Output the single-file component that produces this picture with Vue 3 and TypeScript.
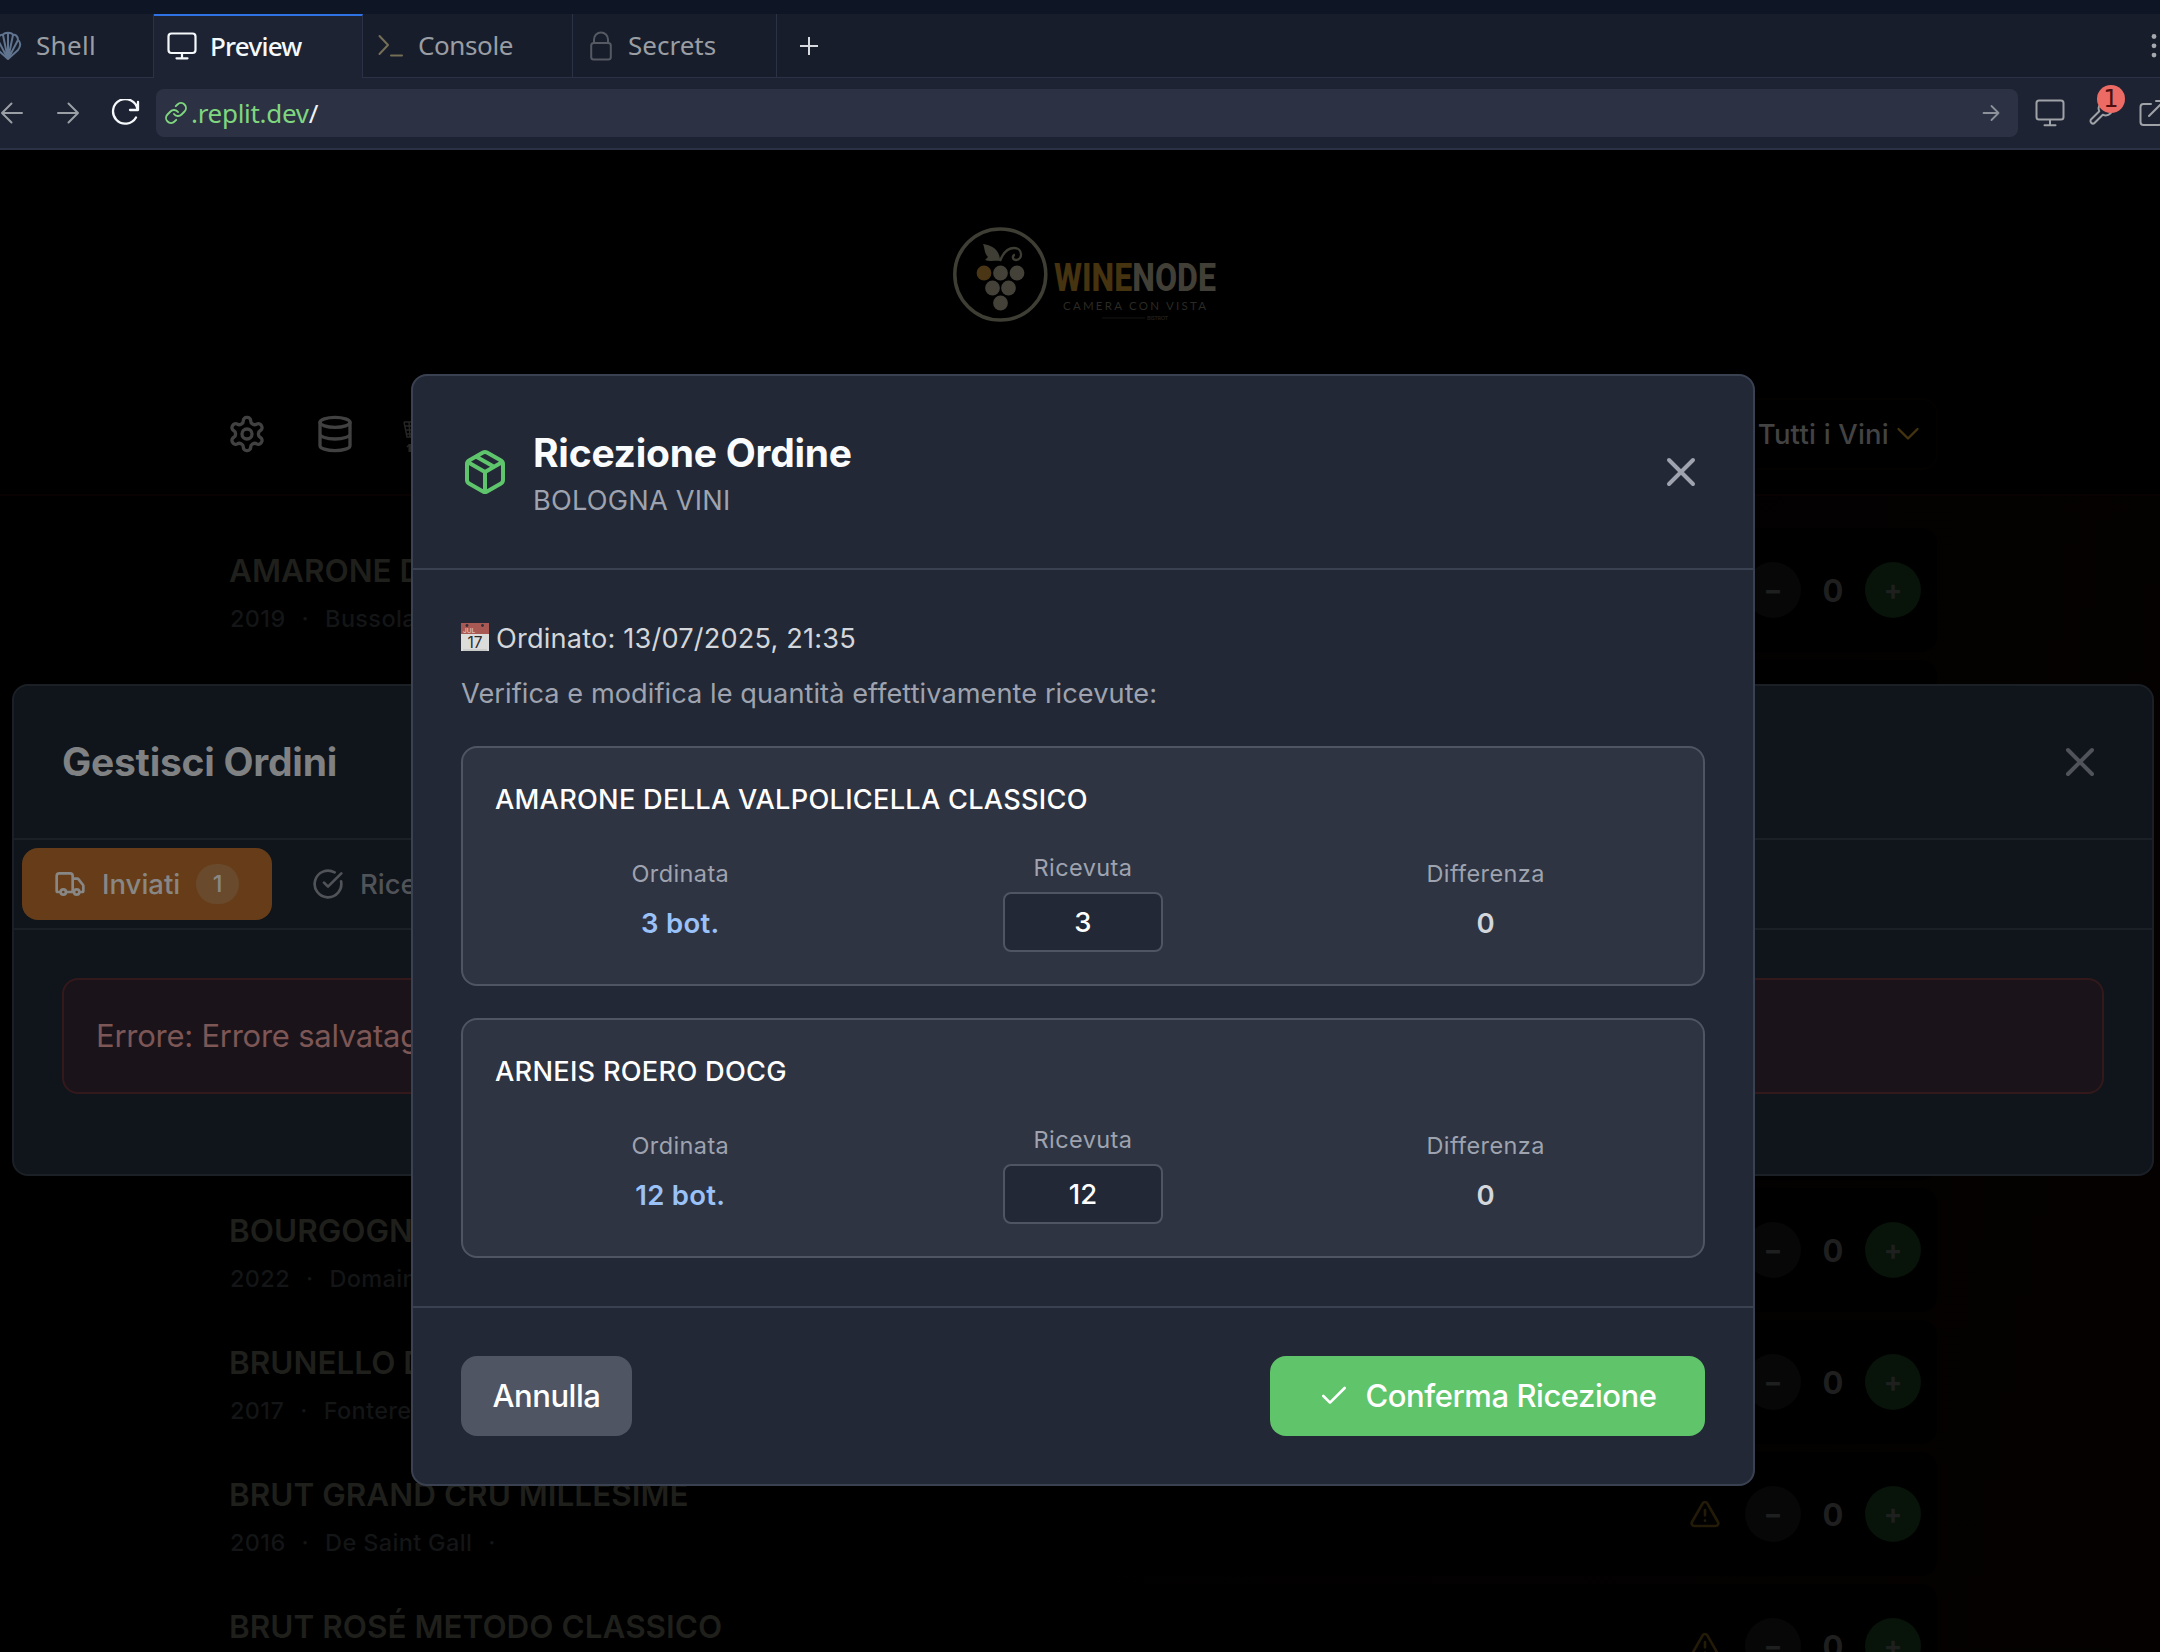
<script setup lang="ts">
interface Wine {
  name: string
  year: string
  producer: string
}

interface OrderLine {
  name: string
  ordered: number
  received: number
}

const wines: Wine[] = [
  { name: 'AMARONE DELLA VALPOLICELLA CLASSICO', year: '2019', producer: 'Bussola' },
  { name: '', year: '', producer: '' },
  { name: '', year: '', producer: '' },
  { name: '', year: '', producer: '' },
  { name: '', year: '', producer: '' },
  { name: 'BOURGOGNE', year: '2022', producer: 'Domaine' },
  { name: 'BRUNELLO DI', year: '2017', producer: 'Fonterenza' },
  { name: 'BRUT GRAND CRU MILLESIME', year: '2016', producer: 'De Saint Gall' },
  { name: 'BRUT ROSÉ METODO CLASSICO', year: '', producer: '' },
]

const lines: OrderLine[] = [
  { name: 'AMARONE DELLA VALPOLICELLA CLASSICO', ordered: 3, received: 3 },
  { name: 'ARNEIS ROERO DOCG', ordered: 12, received: 12 },
]

// grape bunch inside the logo, first berry is highlighted
const berries: [number, number][] = [
  [31, 46], [47.5, 46], [64, 46], [39.5, 61], [55.5, 61], [47.5, 76],
]
</script>

<template>
  <div class="page">
    <div class="strip"></div>
    <div class="tabs">
      <div class="tab shell">
        <svg class="i-shell" width="28" height="30" viewBox="0 0 28 30" fill="none" stroke="#60748f" stroke-width="2" stroke-linejoin="round">
          <path d="M14 28 4 19C1 15 1 11 4 9c0-4 3-6 5-5 1-3 9-3 10 0 2-1 5 1 5 5 3 2 3 6 0 10Z" />
          <path d="M14 28 4 9M14 28 9 4M14 28V2M14 28 19 4M14 28 24 9" />
        </svg>
        <span>Shell</span>
      </div>
      <div class="tab preview">
        <svg width="30" height="28" viewBox="0 0 30 28" fill="none" stroke="#f5f9fc" stroke-width="2.2" stroke-linecap="round">
          <rect x="1.5" y="1.5" width="27" height="19.5" rx="3" /><path d="M15 21v5M9.5 26.3h11" />
        </svg>
        <span>Preview</span>
      </div>
      <div class="tab console">
        <svg width="26" height="24" viewBox="0 0 26 24" fill="none" stroke="#756f55" stroke-width="2" stroke-linecap="round" stroke-linejoin="round">
          <path d="M1.5 2 10 11 1.5 20M13 21.5h11" />
        </svg>
        <span>Console</span>
      </div>
      <div class="tab secrets">
        <svg width="22" height="30" viewBox="0 0 22 30" fill="none" stroke="#545962" stroke-width="2">
          <rect x="1.2" y="12" width="19.6" height="16.5" rx="2.5" /><path d="M4 12V8.5a7 7 0 0 1 14 0V12" />
        </svg>
        <span>Secrets</span>
      </div>
      <div class="plus">
        <svg width="20" height="20" viewBox="0 0 20 20" stroke="#d6d9dd" stroke-width="2"><path d="M10 1v18M1 10h18" /></svg>
      </div>
      <svg class="dots" width="6" height="24" viewBox="0 0 6 24" fill="#a5a8ac">
        <circle cx="3" cy="3" r="2.4" /><circle cx="3" cy="12.3" r="2.4" /><circle cx="3" cy="21.6" r="2.4" />
      </svg>
    </div>
    <div class="toolbar">
      <svg class="back" width="24" height="22" viewBox="0 0 24 22" fill="none" stroke="#9a9fa6" stroke-width="2" stroke-linecap="round" stroke-linejoin="round">
        <path d="M22 11H2M11.5 1.5 2 11l9.5 9.5" />
      </svg>
      <svg class="fwd" width="24" height="22" viewBox="0 0 24 22" fill="none" stroke="#9a9fa6" stroke-width="2" stroke-linecap="round" stroke-linejoin="round">
        <path d="M2 11h20M12.5 1.5 22 11l-9.5 9.5" />
      </svg>
      <svg class="reload" width="30" height="28" viewBox="0 0 30 28" fill="none" stroke="#f5f9fc" stroke-width="2.3" stroke-linecap="round" stroke-linejoin="round">
        <path d="M28 3v8h-8M27.500 10.5A12.300 12.300 0 1 0 26 18.500" />
      </svg>
      <div class="url">
        <svg width="24" height="24" viewBox="0 0 24 24" fill="none" stroke="#7fd67f" stroke-width="1.9" stroke-linecap="round">
          <path d="M10 13a5 5 0 0 0 7.54.54l3-3a5 5 0 0 0-7.07-7.07l-1.72 1.71" />
          <path d="M14 11a5 5 0 0 0-7.54-.54l-3 3a5 5 0 0 0 7.07 7.07l1.71-1.71" />
        </svg>
        <span class="host">.replit.dev</span><span class="slash">/</span>
        <svg class="go" width="18" height="18" viewBox="0 0 18 18" fill="none" stroke="#8d9199" stroke-width="1.8" stroke-linecap="round" stroke-linejoin="round">
          <path d="M1.5 9h15M9.5 2l7 7-7 7" />
        </svg>
      </div>
      <svg class="screen" width="30" height="28" viewBox="0 0 30 28" fill="none" stroke="#9fa2a7" stroke-width="2" stroke-linecap="round">
        <rect x="1.5" y="1.5" width="27" height="19" rx="2.5" /><path d="M15 21v5M9.5 26.3h11" />
      </svg>
      <div class="tool">
        <svg width="28" height="28" viewBox="0 0 24 24" fill="none" stroke="#9fa2a7" stroke-width="1.7" stroke-linecap="round" stroke-linejoin="round">
          <path d="M14.7 6.3a1 1 0 0 0 0 1.4l1.6 1.6a1 1 0 0 0 1.4 0l3.77-3.77a6 6 0 0 1-7.94 7.94l-6.91 6.91a2.12 2.12 0 0 1-3-3l6.91-6.91a6 6 0 0 1 7.94-7.94z" />
        </svg>
        <span class="count">1</span>
      </div>
      <svg class="ext" width="28" height="28" viewBox="0 0 28 28" fill="none" stroke="#9fa2a7" stroke-width="2" stroke-linecap="round" stroke-linejoin="round">
        <path d="M12 5H4.500A3 3 0 0 0 1.500 8v15a3 3 0 0 0 3 3h15a3 3 0 0 0 3-3v-7M10 17 25 2M17 2h8v8" />
      </svg>
    </div>

    <div class="app">
      <div class="brand">
        <svg width="320" height="100" viewBox="0 0 320 100">
          <circle cx="47.3" cy="47.5" r="45.5" fill="none" stroke="#3f3e34" stroke-width="3.5" />
          <circle v-for="(b, i) in berries" :key="i" :cx="b[0]" :cy="b[1]" r="7.4" :fill="i === 0 ? '#4a3614' : '#434138'" />
          <path d="M30 17c9 1 17 6 17 17-4-1-9 1-15-1l3-3c-4-4-3-9-5-13Z" fill="#3f3e34" />
          <path d="M47 34C50 26 55 21 61 21c9 0 9 12 2 12-4 0-4-5-1-5" fill="none" stroke="#3f3e34" stroke-width="2.3" />
          <text class="word" x="101" y="63.5" textLength="162" lengthAdjust="spacingAndGlyphs" fill="#423f36"><tspan fill="#46330f">WINE</tspan>NODE</text>
          <text class="sub" x="110" y="82.5" textLength="143">CAMERA CON VISTA</text>
          <path d="M149 91h43" stroke="#151511" stroke-width="1.2" />
          <text class="tiny" x="194" y="93" textLength="21">BISTROT</text>
        </svg>
      </div>

      <div class="nav">
        <svg class="lucide" width="40" height="40" viewBox="0 0 24 24" stroke="#414141">
          <path d="M12.22 2h-.44a2 2 0 0 0-2 2v.18a2 2 0 0 1-1 1.73l-.43.25a2 2 0 0 1-2 0l-.15-.08a2 2 0 0 0-2.73.73l-.22.38a2 2 0 0 0 .73 2.73l.15.1a2 2 0 0 1 1 1.72v.51a2 2 0 0 1-1 1.74l-.15.09a2 2 0 0 0-.73 2.73l.22.38a2 2 0 0 0 2.73.73l.15-.08a2 2 0 0 1 2 0l.43.25a2 2 0 0 1 1 1.73V20a2 2 0 0 0 2 2h.44a2 2 0 0 0 2-2v-.18a2 2 0 0 1 1-1.73l.43-.25a2 2 0 0 1 2 0l.15.08a2 2 0 0 0 2.73-.73l.22-.39a2 2 0 0 0-.73-2.73l-.15-.08a2 2 0 0 1-1-1.74v-.5a2 2 0 0 1 1-1.74l.15-.09a2 2 0 0 0 .73-2.73l-.22-.38a2 2 0 0 0-2.73-.73l-.15.08a2 2 0 0 1-2 0l-.43-.25a2 2 0 0 1-1-1.73V4a2 2 0 0 0-2-2z" />
          <circle cx="12" cy="12" r="3" />
        </svg>
        <svg class="lucide" width="40" height="40" viewBox="0 0 24 24" stroke="#414141">
          <ellipse cx="12" cy="5" rx="9" ry="3" /><path d="M3 5v14a9 3 0 0 0 18 0V5M3 12a9 3 0 0 0 18 0" />
        </svg>
        <svg class="cart" width="36" height="36" viewBox="0 0 36 36" fill="none" stroke="#262626" stroke-width="1.4">
          <path d="M1 4h30M2 8h28M3 12h26M3.5 16h25M1 4l3 15h26M6 4l1 15M11 4v15M16 4v15M4 29c2-3 6-3 7 0" />
          <path d="M7 26v8" stroke-width="3" />
        </svg>
        <div class="filter">
          <span>Tutti i Vini</span>
          <svg width="24" height="14" viewBox="0 0 24 14" fill="none" stroke="#44330f" stroke-width="2.4" stroke-linecap="round" stroke-linejoin="round"><path d="M2.5 2 12 11.5 21.5 2" /></svg>
        </div>
      </div>

      <div class="wines">
        <div v-for="(w, i) in wines" :key="i" class="wine">
          <div class="info">
            <div class="name">{{ w.name }}</div>
            <div v-if="w.year" class="meta">
              <span>{{ w.year }}</span><span>·</span><span>{{ w.producer }}</span><span>·</span>
            </div>
          </div>
          <svg class="lucide warn" width="32" height="32" viewBox="0 0 24 24" stroke="#231a08">
            <path d="m21.73 18-8-14a2 2 0 0 0-3.48 0l-8 14A2 2 0 0 0 4 21h16a2 2 0 0 0 1.73-3ZM12 9v4M12 17h.01" />
          </svg>
          <div class="round minus">−</div>
          <div class="qty">0</div>
          <div class="round add">+</div>
        </div>
      </div>

      <section class="orders">
        <header class="orders-head">
          <h2>Gestisci Ordini</h2>
          <svg class="lucide" width="48" height="48" viewBox="0 0 24 24" stroke="#505359"><path d="M18 6 6 18M6 6l12 12" /></svg>
        </header>
        <div class="orders-tabs">
          <div class="otab active">
            <svg class="lucide" width="32" height="32" viewBox="0 0 24 24" stroke="#888786">
              <path d="M14 18V6a2 2 0 0 0-2-2H4a2 2 0 0 0-2 2v11a1 1 0 0 0 1 1h2M15 18H9M19 18h2a1 1 0 0 0 1-1v-3.65a1 1 0 0 0-.22-.624l-3.48-4.35A1 1 0 0 0 17.52 8H14" />
              <circle cx="17" cy="18" r="2" /><circle cx="7" cy="18" r="2" />
            </svg>
            <span>Inviati</span>
            <b>1</b>
          </div>
          <div class="otab">
            <svg class="lucide" width="32" height="32" viewBox="0 0 24 24" stroke="#505357">
              <path d="M21.801 10A10 10 0 1 1 17 3.335M9 11l3 3L22 4" />
            </svg>
            <span>Ricevuti</span>
          </div>
        </div>
        <div class="error">Errore: Errore salvataggio</div>
      </section>

      <section class="modal">
        <header class="modal-head">
          <svg class="lucide" width="48" height="48" viewBox="0 0 24 24" stroke="#5fc56c">
            <path d="m7.5 4.27 9 5.15M21 8a2 2 0 0 0-1-1.73l-7-4a2 2 0 0 0-2 0l-7 4A2 2 0 0 0 3 8v8a2 2 0 0 0 1 1.73l7 4a2 2 0 0 0 2 0l7-4A2 2 0 0 0 21 16ZM3.3 7l8.7 5 8.7-5M12 22V12" />
          </svg>
          <div class="titles">
            <h1>Ricezione Ordine</h1>
            <p>BOLOGNA VINI</p>
          </div>
          <svg class="lucide" width="48" height="48" viewBox="0 0 24 24" stroke="#9ea3af"><path d="M18 6 6 18M6 6l12 12" /></svg>
        </header>
        <div class="modal-body">
          <div class="date">
            <svg width="28" height="28" viewBox="0 0 28 28">
              <rect width="28" height="28" fill="#dcdcdb" /><rect width="28" height="11" fill="#a95954" />
              <path d="M2 27h24" stroke="#b9bab9" stroke-width="1" />
              <circle cx="6" cy="2.5" r="1.4" fill="#33303a" /><circle cx="21.5" cy="2.5" r="1.4" fill="#33303a" />
              <text x="2" y="9.8" font-size="6.5" font-weight="600" fill="#dfbab6">JUL</text>
              <text x="14" y="24.5" font-size="15.5" text-anchor="middle" fill="#2d2d2d">17</text>
            </svg>
            <span>Ordinato: 13/07/2025, 21:35</span>
          </div>
          <p class="hint">Verifica e modifica le quantità effettivamente ricevute:</p>
          <div v-for="l in lines" :key="l.name" class="line">
            <h3>{{ l.name }}</h3>
            <div class="cols">
              <div class="col">
                <label>Ordinata</label>
                <strong class="blue">{{ l.ordered }} bot.</strong>
              </div>
              <div class="col mid">
                <label>Ricevuta</label>
                <div class="field">{{ l.received }}</div>
              </div>
              <div class="col">
                <label>Differenza</label>
                <strong>{{ l.received - l.ordered }}</strong>
              </div>
            </div>
          </div>
        </div>
        <footer class="modal-foot">
          <button class="cancel">Annulla</button>
          <button class="confirm">
            <svg class="lucide" width="32" height="32" viewBox="0 0 24 24" stroke="#fff"><path d="M20 6 9 17l-5-5" /></svg>
            <span>Conferma Ricezione</span>
          </button>
        </footer>
      </section>
    </div>
  </div>
</template>

<style>
body {
  background: #000;
  overflow: hidden;
}
</style>

<style scoped>
* {
  box-sizing: border-box;
}
h1, h2, h3, p {
  margin: 0;
}
.page {
  width: 2160px;
  height: 1652px;
  overflow: hidden;
  display: flex;
  flex-direction: column;
  background: #000;
  font-family: Inter, sans-serif;
}
.lucide {
  fill: none;
  stroke-width: 2;
  stroke-linecap: round;
  stroke-linejoin: round;
  flex: none;
}

/* browser chrome */
.strip {
  height: 14px;
  flex: none;
  background: #0e1524;
}
.tabs {
  height: 64px;
  flex: none;
  display: flex;
  background: #171d2b;
  font: 400 26px/36px "Noto Sans", sans-serif;
  color: #9a9da3;
}
.tab {
  display: flex;
  align-items: center;
  border-right: 1px solid #2b3245;
  border-bottom: 1px solid #2b3245;
}
.tab svg {
  flex: none;
}
.tab span {
  padding-bottom: 2px;
}
.shell {
  width: 154px;
  letter-spacing: 0.3px;
}
.i-shell {
  margin-left: -6px;
  margin-right: 14px;
}
.preview {
  width: 209px;
  padding-left: 13px;
  gap: 13px;
  background: #1d2332;
  border-top: 2px solid #2f72e4;
  border-bottom: 0;
  color: #f5f9fc;
  font-weight: 500;
  letter-spacing: -0.75px;
}
.preview svg {
  margin-top: -2px;
}
.preview span {
  padding-bottom: 3px;
}
.console {
  width: 210px;
  padding-left: 15px;
  gap: 14px;
  letter-spacing: -0.4px;
}
.secrets {
  width: 204px;
  padding-left: 17px;
  gap: 16px;
}
.plus {
  flex: 1;
  display: flex;
  align-items: center;
  padding-left: 22px;
  border-bottom: 1px solid #2b3245;
}
.dots {
  width: 9px;
  height: 64px;
  border-bottom: 1px solid #2b3245;
  padding-right: 3px;
}
.toolbar {
  height: 72px;
  flex: none;
  display: flex;
  align-items: center;
  background: #1d2332;
  border-bottom: 2px solid #2b3245;
}
.toolbar svg {
  flex: none;
}
.fwd {
  margin-left: 32px;
}
.reload {
  margin-left: 30px;
}
.url {
  flex: none;
  width: 1862px;
  height: 48px;
  margin-left: 16px;
  padding: 0 18px 0 8px;
  display: flex;
  align-items: center;
  border-radius: 8px;
  background: #2c3143;
  font: 400 26px/36px "Noto Sans", sans-serif;
  letter-spacing: -0.3px;
  color: #f0f3f6;
}
.host {
  margin-left: 3px;
  color: #7fd67f;
}
.go {
  margin-left: auto;
}
.screen {
  margin-left: 17px;
}
.tool {
  flex: none;
  position: relative;
  margin-left: 22px;
  height: 28px;
}
.count {
  position: absolute;
  left: 10px;
  top: -14px;
  width: 28px;
  height: 28px;
  border-radius: 50%;
  background: #ec6b65;
  color: #4d0f10;
  font: 24px/28px "DejaVu Sans", sans-serif;
  text-align: center;
}
.ext {
  margin-left: 24px;
}

/* wine list behind the dialogs */
.app {
  position: relative;
  height: 1502px;
  overflow: hidden;
}
.brand {
  height: 248px;
  padding: 77px 0 0 953px;
}
.word {
  font: 800 38px Roboto, sans-serif;
}
.sub {
  font: 400 11.5px Lato, sans-serif;
  fill: #2b2a24;
}
.tiny {
  font: 700 5.5px Lato, sans-serif;
  fill: #201f1b;
}
.nav {
  height: 98px;
  display: flex;
  align-items: flex-start;
  padding: 0 222px 0 227px;
  border-bottom: 2px solid #090202;
}
.nav .lucide {
  margin: 16px 48px 0 0;
}
.nav .cart {
  margin-top: 20px;
}
.filter {
  height: 72px;
  width: 240px;
  margin-left: auto;
  padding-right: 16px;
  display: flex;
  align-items: center;
  justify-content: flex-end;
  gap: 7px;
  border: 2px solid #040201;
  border-radius: 16px;
  color: #434343;
  font-weight: 500;
  font-size: 27.5px;
  letter-spacing: 0.2px;
}
.wines {
  display: flex;
  flex-direction: column;
  gap: 8px;
  height: 1180px;
  padding: 32px 223px 0 213px;
  background: linear-gradient(100deg, #000 40%, #050101 100%);
}
.wine {
  height: 124px;
  flex: none;
  display: flex;
  align-items: center;
  padding: 0 16px 0 17px;
  background: #000;
  border-radius: 16px;
}
.info {
  flex: 1;
  height: 124px;
  padding-top: 23px;
}
.name {
  height: 40px;
  line-height: 40px;
  font-size: 31.5px;
  font-weight: 600;
  margin-left: -1px;
  white-space: nowrap;
  color: #1f1f1b;
}
.meta {
  display: flex;
  gap: 16px;
  margin-top: 12px;
  line-height: 32px;
  font-size: 23.5px;
  font-weight: 500;
  letter-spacing: 0.35px;
  color: #131516;
}
.warn {
  margin-right: 24px;
}
.round {
  width: 56px;
  height: 56px;
  border-radius: 50%;
  font-size: 28px;
  font-weight: 700;
  line-height: 56px;
  text-align: center;
  color: #1e1f1f;
}
.minus {
  background: #070708;
}
.add {
  background: #08130a;
}
.qty {
  width: 64px;
  text-align: center;
  font-size: 31px;
  font-weight: 700;
  color: #1f1f1f;
}

/* orders dialog */
.orders {
  position: absolute;
  left: 12px;
  top: 534px;
  width: 2142px;
  height: 492px;
  border: 2px solid #1b2027;
  border-radius: 16px;
  background: #10141b;
}
.orders-head {
  height: 154px;
  padding: 0 48px;
  display: flex;
  align-items: center;
  justify-content: space-between;
  border-bottom: 2px solid #1b2027;
}
h2 {
  font-size: 39px;
  line-height: 56px;
  font-weight: 700;
  letter-spacing: -0.25px;
  color: #7f8183;
}
.orders-tabs {
  height: 90px;
  display: flex;
  align-items: center;
  padding: 0 8px;
  border-bottom: 2px solid #1b2027;
}
.otab {
  height: 72px;
  display: flex;
  align-items: center;
  padding: 0 32px;
  gap: 16px;
  border-radius: 16px;
  font-size: 27.5px;
  font-weight: 500;
  color: #505357;
}
.otab + .otab {
  margin-left: 8px;
}
.active {
  width: 250px;
  padding-right: 30px;
  background: #663d18;
  color: #888786;
}
.active b {
  width: 43px;
  height: 40px;
  border-radius: 20px;
  background: #6a4a2d;
  font-size: 23.5px;
  line-height: 40px;
  font-weight: 500;
  text-align: center;
}
.error {
  height: 116px;
  margin: 48px 48px 0;
  padding: 0 32px;
  border: 2px solid #33191c;
  border-radius: 16px;
  background: #1a141a;
  color: #7d5656;
  font-size: 31px;
  line-height: 112px;
  letter-spacing: -0.25px;
}

/* reception dialog */
.modal {
  position: absolute;
  left: 411px;
  top: 224px;
  width: 1344px;
  height: 1112px;
  border: 2px solid #3a4252;
  border-radius: 16px;
  background: #222835;
  display: flex;
  flex-direction: column;
}
.modal-head {
  height: 194px;
  padding: 0 48px;
  display: flex;
  align-items: center;
  border-bottom: 2px solid #3a4252;
}
.titles {
  flex: 1;
  margin-left: 24px;
  padding-top: 2px;
}
h1 {
  font-size: 39px;
  line-height: 56px;
  font-weight: 700;
  letter-spacing: -0.25px;
  color: #fafbfc;
}
.titles p {
  font-size: 27.2px;
  line-height: 40px;
  letter-spacing: 0.2px;
  color: #9ea3af;
}
.modal-body {
  height: 736px;
  padding: 48px 48px 0;
}
.date {
  display: flex;
  align-items: center;
  height: 40px;
  gap: 7px;
  font-size: 27.2px;
  letter-spacing: 0.17px;
  color: #d3d6da;
}
.date svg {
  margin-top: -2px;
}
.date svg text {
  letter-spacing: 0;
}
.hint {
  margin: 16px 0 32px;
  line-height: 40px;
  font-size: 27.2px;
  letter-spacing: 0.05px;
  color: #9ea3af;
}
.line {
  height: 240px;
  margin-bottom: 32px;
  padding: 32px;
  border: 2px solid #4f5562;
  border-radius: 16px;
  background: #2e3442;
}
h3 {
  line-height: 40px;
  font-size: 27.2px;
  font-weight: 500;
  letter-spacing: 0.26px;
  color: #fff;
}
.cols {
  display: grid;
  grid-template-columns: repeat(3, 1fr);
  gap: 32px;
  margin-top: 24px;
}
.col {
  display: flex;
  flex-direction: column;
  align-items: center;
  padding-top: 14px;
}
.col label {
  font-size: 23.5px;
  line-height: 32px;
  letter-spacing: 0.4px;
  color: #9ea3af;
}
.col strong {
  margin-top: 13px;
  line-height: 40px;
  font-size: 27.5px;
  font-weight: 600;
  letter-spacing: 0.3px;
  color: #d3d6da;
}
.col .blue {
  color: #9bc2f8;
}
.mid {
  padding-top: 8px;
}
.field {
  width: 160px;
  height: 60px;
  margin-top: 8px;
  border: 2px solid #4f5562;
  border-radius: 8px;
  background: #222835;
  color: #fff;
  font-size: 27.5px;
  line-height: 56px;
  font-weight: 500;
  text-align: center;
}
.modal-foot {
  flex: 1;
  display: flex;
  align-items: center;
  justify-content: space-between;
  padding: 0 48px;
  border-top: 2px solid #3a4252;
}
button {
  height: 80px;
  border: 0;
  padding: 0;
  border-radius: 16px;
  color: #fff;
  font: 500 31px/80px Inter, sans-serif;
  letter-spacing: -0.45px;
}
.cancel {
  width: 171px;
  background: #4f5563;
}
.confirm {
  width: 435px;
  display: flex;
  align-items: center;
  justify-content: center;
  gap: 15px;
  background: #5fc46a;
}
</style>
